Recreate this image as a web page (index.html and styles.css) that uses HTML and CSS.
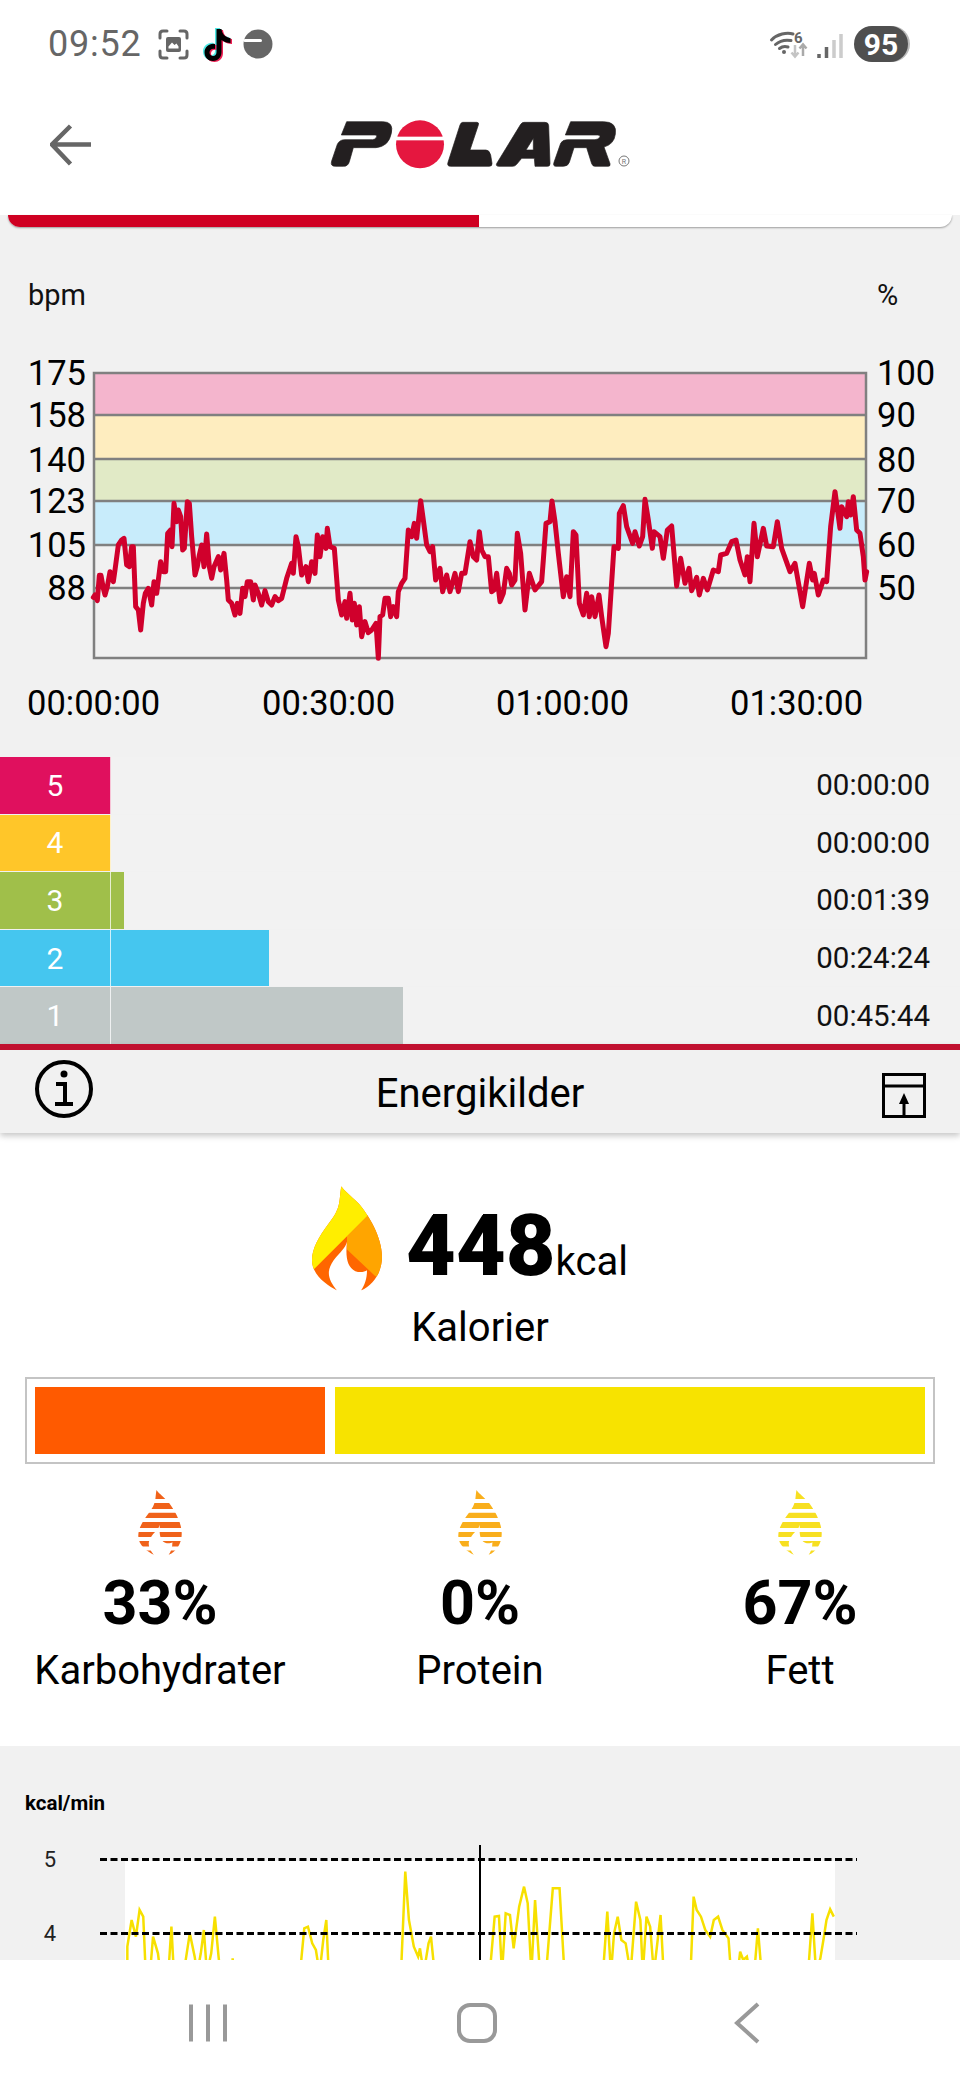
FILE: index.html
```html
<!DOCTYPE html>
<html lang="no">
<head>
<meta charset="utf-8">
<title>Polar – Energikilder</title>
<link rel="stylesheet" href="styles.css">
</head>
<body>
<div class="page">
  <svg width="0" height="0" class="defs">
    <defs>
      <path id="flame" d="M188 78 C180 120 190 140 150 190 C120 230 100 265 100 300 C100 345 145 375 175 391 C150 360 140 335 165 300 C185 275 200 265 205 245 C200 290 205 320 230 333 C245 338 258 335 265 330 C265 355 258 375 247 391 C285 375 310 335 310 290 C310 230 270 165 240 130 C215 105 195 90 188 78 Z"/>
      <clipPath id="flameClip"><use href="#flame"/></clipPath>
    </defs>
  </svg>

  <header class="top">
    <div class="status">
      <div class="status-left">
        <span class="clock">09:52</span>
        <svg class="ic-shot" viewBox="0 0 31 31" width="31" height="31">
          <path class="shot-line" d="M2 9V5Q2 2 5 2H9M22 2H26Q29 2 29 5V9M29 22V26Q29 29 26 29H22M9 29H5Q2 29 2 26V22"/>
          <rect class="shot-fill" x="8" y="8" width="15" height="15" rx="2"/>
          <path class="shot-hole" d="M10.500 17.500L14 13.500L16.500 16L18.500 14.500L20.500 17.500V19.500H10.500Z"/>
        </svg>
        <svg class="ic-tiktok" viewBox="0 0 30 35" width="30" height="35">
          <path class="tk-cyan" d="M13 1H18C18.500 6 22 9.500 27 10V15C23.500 15 20.500 14 18 12V24C18 30 13.500 33 9.500 33C5 33 1 29.500 1 24.500C1 19 6 15 11.500 16V21C8.500 20 6 22 6 24.500C6 26.500 7.500 28 9.500 28C11.500 28 13 26.500 13 24Z"/>
          <path class="tk-red" transform="translate(3 2)" d="M13 1H18C18.500 6 22 9.500 27 10V15C23.500 15 20.500 14 18 12V24C18 30 13.500 33 9.500 33C5 33 1 29.500 1 24.500C1 19 6 15 11.500 16V21C8.500 20 6 22 6 24.500C6 26.500 7.500 28 9.500 28C11.500 28 13 26.500 13 24Z"/>
          <path class="tk-black" transform="translate(1.500 1)" d="M13 1H18C18.500 6 22 9.500 27 10V15C23.500 15 20.500 14 18 12V24C18 30 13.500 33 9.500 33C5 33 1 29.500 1 24.500C1 19 6 15 11.500 16V21C8.500 20 6 22 6 24.500C6 26.500 7.500 28 9.500 28C11.500 28 13 26.500 13 24Z"/>
        </svg>
        <svg class="ic-dnd" viewBox="0 0 30 30" width="30" height="30">
          <circle class="dnd-disc" cx="15" cy="15" r="14.500"/>
          <path class="dnd-slit" d="M2 11.500H17.500"/>
        </svg>
      </div>
      <div class="status-right">
        <svg class="ic-wifi" viewBox="0 0 38 28" width="38" height="28">
          <path class="wifi-arc" d="M1.500 10C7 4 17 2 23 4"/>
          <path class="wifi-arc" d="M5.500 14.500C10 10.500 15 9.500 21 10.500"/>
          <path class="wifi-arc" d="M9.500 18.500C12 16.500 15 16 18 17"/>
          <circle class="wifi-dot" cx="14" cy="22" r="2"/>
          <text class="wifi-six" x="24" y="13">6</text>
          <path class="arrow-down" d="M25 15V26M21.500 22.500L25 26.500L28.500 22.500"/>
          <path class="arrow-up" d="M33 26V15M29.500 18.500L33 14.500L36.500 18.500"/>
        </svg>
        <svg class="ic-signal" viewBox="0 0 26 26" width="26" height="26">
          <path class="sig-dark" d="M2 25V21M9.500 25V14"/>
          <path class="sig-light" d="M17 25V7M24 25V1"/>
        </svg>
        <span class="battery">95</span>
      </div>
    </div>
    <div class="appbar">
      <svg class="ic-back" viewBox="0 0 42 42" width="42" height="42">
        <path class="back-line" d="M41 20.500H3M20.500 2L2 20.500L20.500 40"/>
      </svg>
      <svg class="logo" viewBox="0 0 960 210" width="320" height="70" role="img" aria-label="Polar">
        <path class="logo-black" d="M80 50H188Q222 50 214 85Q206 125 168 128H100L88 170Q84 184 70 184H46Q30 184 35 168L52 118Q58 104 75 104H158Q168 104 170 94Q171 90 165 90H64Z"/>
        <circle class="logo-red" cx="300" cy="118" r="72"/>
        <rect class="logo-slit" x="220" y="95" width="160" height="11"/>
        <path class="logo-black" d="M428 52H470Q478 52 475 60L450 135H498Q508 135 512 150L516 175Q517 184 508 184H392Q380 184 384 172L420 60Q423 52 428 52Z"/>
        <path class="logo-black" fill-rule="evenodd" d="M612 52H675Q685 52 686 62L690 176Q690 184 682 184H645L643 160H605L590 178Q585 184 578 184H537Q525 184 531 174L602 58Q606 52 612 52ZM640 100L618 135H640Z"/>
        <path class="logo-black" d="M752 50H850Q892 50 886 88Q882 118 852 126L870 176Q872 184 864 184H825Q818 184 815 176L800 128H762L748 172Q744 184 730 184H708Q698 184 702 172L722 115Q727 104 742 104H825Q838 104 840 94Q840 90 832 90H736Z"/>
        <circle class="logo-reg" cx="912" cy="168" r="15"/>
        <text class="logo-r" x="912" y="176" text-anchor="middle">R</text>
      </svg>
    </div>
  </header>
  <div class="tabs"><div class="tab-fill"></div></div>

  <svg class="hr-chart" viewBox="0 227 960 530" width="960" height="530">
    <text class="axis-unit" x="28" y="305">bpm</text>
    <text class="axis-unit" x="877" y="305">%</text>
    <rect class="z-pink" x="94" y="373" width="772" height="42"/>
    <rect class="z-yellow" x="94" y="415" width="772" height="44"/>
    <rect class="z-green" x="94" y="459" width="772" height="42"/>
    <rect class="z-blue" x="94" y="501" width="772" height="44"/>
    <path class="grid" d="M94 415H866M94 459H866M94 501H866M94 545H866M94 588H866"/>
    <rect class="frame" x="94" y="373" width="772" height="285"/>
    <g class="axis-l">
      <text x="86" y="385">175</text><text x="86" y="427">158</text><text x="86" y="472">140</text><text x="86" y="513">123</text><text x="86" y="557">105</text><text x="86" y="600">88</text>
    </g>
    <g class="axis-r">
      <text x="877" y="385">100</text><text x="877" y="427">90</text><text x="877" y="472">80</text><text x="877" y="513">70</text><text x="877" y="557">60</text><text x="877" y="600">50</text>
    </g>
    <g class="axis-t">
      <text x="27" y="715">00:00:00</text><text x="262" y="715">00:30:00</text><text x="496" y="715">01:00:00</text><text x="730" y="715">01:30:00</text>
    </g>
    <g transform="translate(0 340) scale(0.33333)">
      <polyline class="hr-line" points="280,772 285,765 292,782 298,706 303,706 310,745 315,765 322,740 330,695 340,725 345,690 355,615 365,600 372,595 380,675 388,680 395,620 400,620 407,800 415,810 422,870 430,790 436,760 445,745 455,795 462,725 470,760 482,665 490,695 497,695 503,580 512,570 516,620 522,490 530,545 535,510 542,530 548,630 553,625 562,485 568,490 575,590 585,705 592,680 598,645 605,615 612,680 620,582 628,680 635,715 642,680 655,650 662,690 672,640 680,720 685,780 695,790 705,825 712,790 720,820 728,745 735,770 742,725 752,725 760,780 765,735 775,760 785,795 795,752 805,785 815,795 825,770 835,782 845,775 860,715 875,670 880,700 888,590 895,620 905,705 918,680 925,725 935,665 945,700 952,585 960,650 968,590 978,625 982,565 990,620 1003,625 1015,780 1025,825 1035,785 1040,835 1050,760 1057,840 1063,790 1070,855 1078,800 1085,890 1095,845 1105,878 1115,870 1128,850 1135,955 1140,830 1148,825 1155,775 1165,775 1172,830 1180,800 1190,830 1195,755 1205,730 1215,715 1225,570 1235,590 1243,550 1250,595 1262,482 1270,540 1280,615 1290,635 1298,620 1307,720 1320,685 1328,755 1340,705 1350,755 1365,700 1375,755 1385,700 1395,700 1410,605 1420,650 1430,660 1438,575 1445,630 1455,650 1465,650 1475,755 1482,750 1490,700 1500,785 1510,760 1520,685 1528,700 1535,735 1545,720 1552,580 1562,640 1575,810 1588,700 1605,750 1625,725 1630,660 1638,550 1650,545 1656,483 1665,545 1675,640 1690,770 1700,710 1710,770 1720,575 1728,585 1738,790 1750,825 1760,760 1768,830 1775,770 1785,830 1797,765 1805,830 1818,920 1825,880 1842,620 1855,625 1858,520 1870,497 1880,560 1898,610 1905,575 1918,618 1928,590 1935,478 1945,540 1957,625 1962,575 1980,590 1990,655 2002,570 2015,558 2030,738 2042,655 2055,730 2067,685 2075,752 2090,712 2098,765 2110,715 2122,750 2140,690 2155,695 2162,645 2180,640 2195,605 2208,600 2220,660 2235,705 2242,650 2250,725 2262,550 2272,650 2290,565 2300,618 2320,620 2332,545 2345,625 2370,695 2385,670 2408,800 2428,670 2438,720 2443,700 2455,765 2470,720 2480,725 2492,560 2505,455 2520,565 2525,500 2540,530 2545,485 2552,525 2560,470 2570,570 2580,580 2590,650 2595,720 2600,695"/>
    </g>
  </svg>

  <section class="zones">
    <div class="zone"><div class="fill c5" style="width:111px"><span class="num">5</span></div><span class="ztime">00:00:00</span></div>
    <div class="zone"><div class="fill c4" style="width:111px"><span class="num">4</span></div><span class="ztime">00:00:00</span></div>
    <div class="zone"><div class="fill c3" style="width:124px"><span class="num">3</span></div><span class="ztime">00:01:39</span></div>
    <div class="zone"><div class="fill c2" style="width:269px"><span class="num">2</span></div><span class="ztime">00:24:24</span></div>
    <div class="zone"><div class="fill c1" style="width:403px"><span class="num">1</span></div><span class="ztime">00:45:44</span></div>
  </section>

  <div class="toolbar">
    <svg class="ic-info" viewBox="0 0 60 60" width="60" height="60">
      <circle class="tool-line" cx="30" cy="30" r="27"/>
      <circle class="tool-dot" cx="30" cy="15" r="3.500"/>
      <path class="tool-line" d="M22 25H31V44M21 45H39"/>
    </svg>
    <h1 class="title">Energikilder</h1>
    <svg class="ic-export" viewBox="0 0 44 45" width="44" height="45">
      <rect class="tool-thin" x="1.500" y="1.500" width="41" height="42"/>
      <path class="tool-thin" d="M1.500 13H42.500M22 43V28"/>
      <path class="tool-dot" d="M22 20L27 31H17Z"/>
    </svg>
  </div>

  <section class="energy">
    <div class="hero">
      <svg class="hero-flame" viewBox="100 78 210 314" width="70" height="105">
        <g clip-path="url(#flameClip)">
          <rect class="fl-orange" x="90" y="70" width="230" height="330"/>
          <polygon class="fl-amber" points="265,168 205,228 205,268 290,348 330,348 330,70 265,70"/>
          <polygon class="fl-yellow" points="90,70 265,70 265,168 108,325 90,343"/>
        </g>
      </svg>
      <div class="hero-num"><span class="kcal-big">448</span><span class="kcal-unit">kcal</span></div>
    </div>
    <div class="kalorier">Kalorier</div>
    <div class="ratio">
      <div class="r-carb"></div>
      <div class="r-fat"></div>
    </div>
    <div class="macros">
      <div class="macro">
        <svg class="drop d-carb" viewBox="100 78 210 314" width="44" height="65"><use href="#flame"/><path class="stripes" d="M90 131H320M90 179H320M90 223H320M90 271H320M90 315H320M90 361H320"/></svg>
        <div class="pct">33%</div>
        <div class="mlabel">Karbohydrater</div>
      </div>
      <div class="macro">
        <svg class="drop d-prot" viewBox="100 78 210 314" width="44" height="65"><use href="#flame"/><path class="stripes" d="M90 131H320M90 179H320M90 223H320M90 271H320M90 315H320M90 361H320"/></svg>
        <div class="pct">0%</div>
        <div class="mlabel">Protein</div>
      </div>
      <div class="macro">
        <svg class="drop d-fat" viewBox="100 78 210 314" width="44" height="65"><use href="#flame"/><path class="stripes" d="M90 131H320M90 179H320M90 223H320M90 271H320M90 315H320M90 361H320"/></svg>
        <div class="pct">67%</div>
        <div class="mlabel">Fett</div>
      </div>
    </div>
  </section>

  <svg class="kcal-chart" viewBox="0 1746 960 334" width="960" height="334">
    <text class="kc-unit" x="25" y="1810">kcal/min</text>
    <rect class="kc-plot" x="125" y="1861" width="710" height="219"/>
    <g transform="translate(0 1740) scale(0.6122 0.33333)">
      <polyline class="kc-line" points="208,700 208,620 215,540 222,590 228,510 234,530 238,700 245,700 250,590 258,640 262,700 275,700 280,560 284,700 300,700 310,580 318,650 322,700 328,640 333,570 338,700 345,640 351,530 357,650 360,700 380,700 380,655 382,700 490,700 497,565 503,560 510,610 516,630 522,700 528,600 533,540 537,700 655,700 662,395 668,540 676,620 683,650 686,625 692,700 700,610 704,590 710,700 800,700 808,530 815,528 820,700 826,520 833,525 839,625 848,500 856,440 862,490 868,700 874,480 882,700 892,700 903,445 914,445 922,700 985,700 992,515 998,700 1003,580 1009,530 1015,600 1022,610 1030,700 1039,485 1046,540 1050,700 1056,530 1062,560 1068,700 1079,525 1084,700 1128,700 1133,470 1138,510 1145,530 1152,570 1160,590 1166,540 1173,530 1180,570 1190,595 1194,700 1205,700 1209,635 1214,660 1220,650 1225,700 1232,700 1238,565 1244,700 1320,700 1327,520 1333,700 1340,655 1345,600 1350,540 1356,508 1362,530"/>
    </g>
    <path class="kc-dash" d="M100 1859.500H857M100 1933.500H857"/>
    <path class="kc-axis" d="M480 1845V2080"/>
    <text class="kc-tick" x="50" y="1867">5</text>
    <text class="kc-tick" x="50" y="1941">4</text>
  </svg>

  <nav class="navbar">
    <svg class="ic-recents" viewBox="0 0 38 40" width="38" height="40"><path class="nav-line" d="M2 1.500V38.500M19 1.500V38.500M36 1.500V38.500"/></svg>
    <svg class="ic-home" viewBox="0 0 42 42" width="42" height="42"><rect class="nav-line" x="3" y="3" width="36" height="36" rx="11"/></svg>
    <svg class="ic-navback" viewBox="0 0 28 42" width="28" height="42"><path class="nav-line" d="M25 2L4 21L25 40"/></svg>
  </nav>
</div>
</body>
</html>
```
FILE: styles.css
```css
* { box-sizing: border-box; }
html, body { margin: 0; padding: 0; background: #f1f1f1; }
body { font-family: Roboto, "Liberation Sans", sans-serif; color: #000; }
.page { position: relative; width: 960px; height: 2080px; overflow: hidden; background: #f1f1f1; }
.defs { position: absolute; }
svg { display: block; }

.top { background: #fff; height: 215px; }
.status { height: 88px; display: flex; justify-content: space-between; align-items: center; padding: 0 52px 0 48px; }
.status-left, .status-right { display: flex; align-items: center; }
.clock { font-size: 36px; font-weight: 400; color: #666; width: 110px; letter-spacing: .8px; }
.ic-tiktok { margin-left: 13px; }
.ic-dnd { margin-left: 11px; }
.shot-line { fill: none; stroke: #666; stroke-width: 3; stroke-linecap: round; }
.shot-fill { fill: #666; }
.shot-hole { fill: #fff; }
.tk-cyan { fill: #4fe8e4; }
.tk-red { fill: #ee1d52; }
.tk-black { fill: #000; }
.dnd-disc { fill: #666; }
.dnd-slit { stroke: #fff; stroke-width: 3; stroke-linecap: round; fill: none; }
.ic-wifi { overflow: visible; }
.wifi-arc { fill: none; stroke: #666; stroke-width: 3; stroke-linecap: round; }
.wifi-dot { fill: #666; }
.wifi-six { font-size: 15px; font-weight: 700; fill: #666; }
.arrow-down, .arrow-up { fill: none; stroke-width: 2.500; }
.arrow-down { stroke: #c4c4c4; }
.arrow-up { stroke: #aaa; }
.ic-signal { margin-left: 9px; margin-top: 3px; }
.sig-dark, .sig-light { stroke-width: 3.500; fill: none; }
.sig-dark { stroke: #666; }
.sig-light { stroke: #ccc; }
.battery { margin-left: 11px; width: 54px; height: 36px; border-radius: 18px; background: #4f4f4f; color: #fff; font-size: 30px; font-weight: 700; display: flex; align-items: center; justify-content: center; box-shadow: 2px 0 0 #bbb; }

.appbar { position: relative; height: 127px; display: flex; align-items: flex-start; justify-content: center; padding-top: 17px; }
.ic-back { position: absolute; left: 50px; top: 36px; }
.back-line { fill: none; stroke: #666; stroke-width: 4.500; }
.logo-black { fill: #231f20; stroke: #231f20; stroke-width: 2; }
.logo-red { fill: #e5173f; }
.logo-slit { fill: #fff; }
.logo-reg { fill: none; stroke: #777; stroke-width: 3; }
.logo-r { font-size: 21px; fill: #777; font-family: Roboto, sans-serif; }

.tabs { height: 12px; margin: 0 8px; background: #fff; border-radius: 0 0 12px 12px; box-shadow: 0 1px 2px rgba(0,0,0,.35); overflow: hidden; }
.tab-fill { width: 471px; height: 12px; background: #cf0022; }

.axis-unit { font-size: 29px; fill: #111; }
.axis-l text { font-size: 34.500px; text-anchor: end; fill: #000; }
.axis-r text { font-size: 34.500px; fill: #000; }
.axis-t text { font-size: 34.500px; fill: #000; }
.z-pink { fill: #f4b5cd; }
.z-yellow { fill: #feedbf; }
.z-green { fill: #e1eac6; }
.z-blue { fill: #c8ecfb; }
.grid { stroke: #808080; stroke-width: 2.500; fill: none; }
.frame { fill: none; stroke: #808080; stroke-width: 2.500; }
.hr-line { fill: none; stroke: #d0002c; stroke-width: 15; stroke-linejoin: round; stroke-linecap: round; }

.zones { display: flex; flex-direction: column; gap: 1px; height: 287px; }
.zone { flex: 1; min-height: 0; display: flex; align-items: stretch; background: #f2f2f2; }
.fill { display: flex; }
.num { width: 111px; flex: none; color: #fff; font-size: 30px; display: flex; align-items: center; justify-content: center; border-right: 1px solid rgba(255,255,255,.75); }
.c5 { background: #e0105e; }
.c4 { background: #ffc629; }
.c3 { background: #a0bf4a; }
.c2 { background: #45c6ef; }
.c1 { background: #c0c8c7; }
.ztime { margin-left: auto; padding-right: 30px; font-size: 29.500px; color: #111; align-self: center; }

.toolbar { position: relative; height: 89px; border-top: 6px solid #c0102f; background: #f1f1f1; box-shadow: 0 3px 6px rgba(0,0,0,.22); display: grid; grid-template-columns: 1fr auto 1fr; align-items: center; padding: 0 34px; }
.ic-info { margin-bottom: 5px; }
.ic-export { justify-self: end; margin-top: 7px; }
.title { margin: 4px 0 0; font-size: 40px; font-weight: 400; line-height: 44px; }
.tool-line { fill: none; stroke: #000; stroke-width: 4; }
.tool-thin { fill: none; stroke: #000; stroke-width: 3; }
.tool-dot { fill: #000; }

.energy { background: #fff; padding: 53px 0 53px; }
.hero { display: flex; justify-content: center; padding-right: 20px; gap: 24px; height: 105px; }
.hero-num { display: flex; align-items: baseline; margin-top: 17px; }
.kcal-big { font-size: 86px; line-height: 86px; font-weight: 900; }
.kcal-unit { font-size: 40px; }
.kalorier { margin-top: 15px; text-align: center; font-size: 40px; line-height: 44px; }
.fl-orange { fill: #ff6600; }
.fl-amber { fill: #ffa500; }
.fl-yellow { fill: #ffee00; }

.ratio { margin: 27px 25px 0; width: 910px; height: 87px; border: 2px solid #c4c4c4; padding: 8px; display: flex; gap: 10px; }
.r-carb { width: 290px; background: #ff5a00; }
.r-fat { flex: 1; background: #f7e300; }

.macros { margin-top: 26px; display: grid; grid-template-columns: repeat(3, 320px); }
.macro { display: flex; flex-direction: column; align-items: center; }
.pct { margin-top: 19px; font-size: 61px; line-height: 58px; font-weight: 700; }
.mlabel { margin-top: 17px; font-size: 40px; line-height: 44px; }
.stripes { stroke: #fff; stroke-width: 19; fill: none; }
.d-carb { fill: #f0621a; }
.d-prot { fill: #f9ae1c; }
.d-fat { fill: #f7e022; }

.kc-unit { font-size: 20.500px; font-weight: 700; }
.kc-plot { fill: #fff; }
.kc-line { fill: none; stroke: #f7e000; stroke-width: 2.500; vector-effect: non-scaling-stroke; }
.kc-dash { fill: none; stroke: #000; stroke-width: 3; stroke-dasharray: 7 3.500; }
.kc-axis { stroke: #000; stroke-width: 2; }
.kc-tick { font-size: 22px; text-anchor: middle; fill: #222; }

.navbar { position: absolute; left: 0; right: 0; bottom: 0; height: 120px; background: #fff; }
.nav-line { fill: none; stroke: #999; stroke-width: 4; }
.ic-recents { position: absolute; left: 189px; top: 43px; }
.ic-home { position: absolute; left: 456px; top: 42px; }
.ic-navback { position: absolute; left: 733px; top: 42px; }
```
